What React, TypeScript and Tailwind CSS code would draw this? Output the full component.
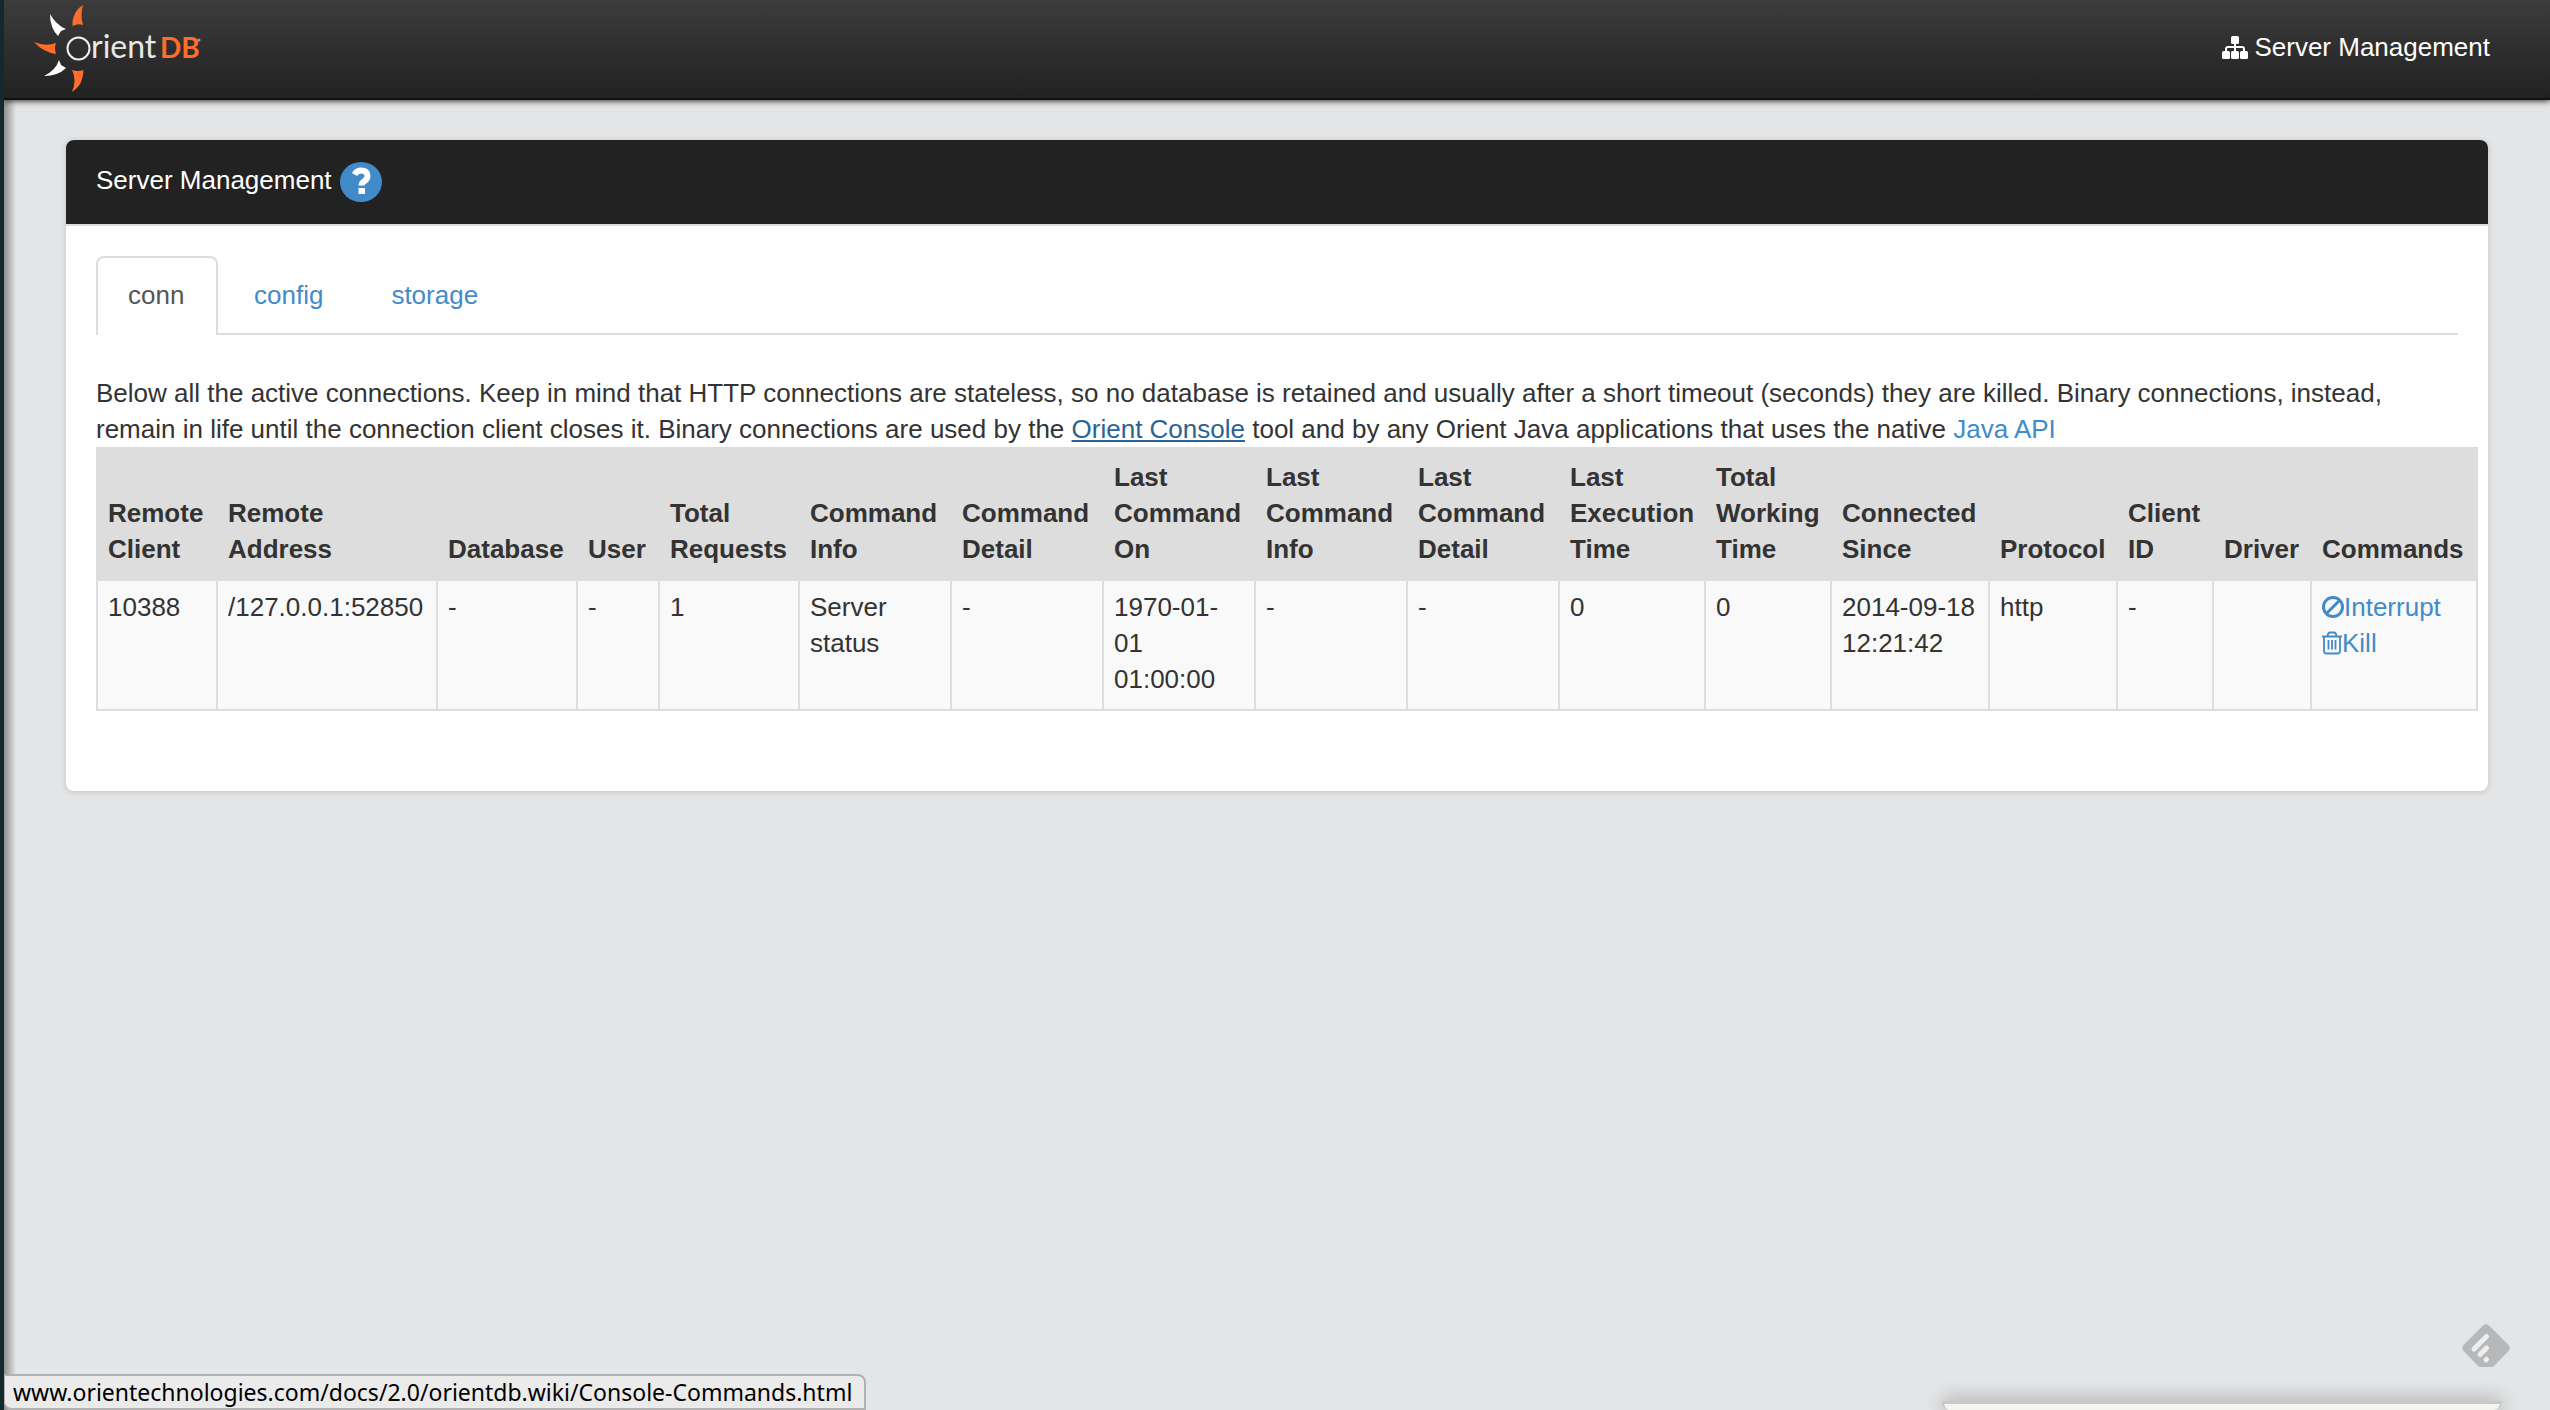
import React from "react";

const columns: { title: string; width: string; value: string }[] = [
  { title: "Remote\nClient", width: "w-[120px]", value: "10388" },
  { title: "Remote\nAddress", width: "w-[220px]", value: "/127.0.0.1:52850" },
  { title: "Database", width: "w-[140px]", value: "-" },
  { title: "User", width: "w-[82px]", value: "-" },
  { title: "Total\nRequests", width: "w-[140px]", value: "1" },
  { title: "Command\nInfo", width: "w-[152px]", value: "Server\nstatus" },
  { title: "Command\nDetail", width: "w-[152px]", value: "-" },
  { title: "Last\nCommand\nOn", width: "w-[152px]", value: "1970-01-\n01\n01:00:00" },
  { title: "Last\nCommand\nInfo", width: "w-[152px]", value: "-" },
  { title: "Last\nCommand\nDetail", width: "w-[152px]", value: "-" },
  { title: "Last\nExecution\nTime", width: "w-[146px]", value: "0" },
  { title: "Total\nWorking\nTime", width: "w-[126px]", value: "0" },
  { title: "Connected\nSince", width: "w-[158px]", value: "2014-09-18\n12:21:42" },
  { title: "Protocol", width: "w-[128px]", value: "http" },
  { title: "Client\nID", width: "w-[96px]", value: "-" },
  { title: "Driver", width: "w-[98px]", value: "" },
  { title: "Commands", width: "w-[166px]", value: "" },
];

function Logo() {
  return (
    <svg viewBox="0 0 180 98" className="h-[98px] w-[180px]" role="img" aria-label="OrientDB">
      <path d="M53 5C46 9 42 17 42.500 26Q48 23 53 25Q50 15 53 5Z" fill="#ff6c2c" />
      <path d="M20 14Q20 28 28 36L31 31L36 29Q26 25 20 14Z" fill="#fff" />
      <path d="M4 42Q13 52 26 54Q24 48 26 43Q16 47 4 42Z" fill="#ff6c2c" />
      <path d="M14 76Q28 76 36 68L31 65L29 60Q26 70 14 76Z" fill="#fff" />
      <path d="M42 70Q48 72 53.500 70C53 80 50 87 42 92Q47 80 42 70Z" fill="#ff6c2c" />
      <circle cx="48.500" cy="48.500" r="11" fill="none" stroke="#f2f2f2" strokeWidth="2" />
      <text x="61" y="58" fontSize="32" fontFamily="Lato" fontWeight="400" fill="#e8e8e8">rient</text>
      <text x="130" y="58" fontSize="28" fontFamily="Lato" fontWeight="700" fill="#ff6c2c">DB</text>
      <circle cx="169" cy="40" r="1.500" fill="#999" />
    </svg>
  );
}

function SitemapIcon() {
  return (
    <svg viewBox="0 0 26 24" className="h-6 w-[26px]" fill="#fff" aria-hidden="true">
      <rect x="9" y="1" width="8" height="8" rx="1.500" />
      <rect x="0" y="16" width="8" height="8" rx="1.500" />
      <rect x="9" y="16" width="8" height="8" rx="1.500" />
      <rect x="18" y="16" width="8" height="8" rx="1.500" />
      <path d="M13 8v9M4 17v-3q0-2 2-2h14q2 0 2 2v3" fill="none" stroke="#fff" strokeWidth="2" />
    </svg>
  );
}

function HelpIcon() {
  return (
    <svg viewBox="0 0 42 40" className="h-10 w-[42px]" aria-hidden="true">
      <ellipse cx="21" cy="20" rx="21" ry="20" fill="#428bca" />
      <path d="M14.500 12.500Q17 8.500 21 8.500Q27.500 8.500 27.500 14Q27.500 17 24.500 19Q21.500 21 21.500 23.500" fill="none" stroke="#fff" strokeWidth="6" />
      <rect x="18.500" y="26" width="6.500" height="6" fill="#fff" />
    </svg>
  );
}

function BanIcon() {
  return (
    <svg viewBox="0 0 22 24" className="inline h-6 w-[22px] align-[-3px]" fill="none" stroke="currentColor" strokeWidth="3" aria-hidden="true">
      <circle cx="11" cy="12" r="9.500" />
      <path d="M4.500 18.500L17.500 5.500" />
    </svg>
  );
}

function TrashIcon() {
  return (
    <svg viewBox="0 0 20 24" className="inline h-6 w-5 align-[-3px]" fill="none" stroke="currentColor" strokeWidth="1.800" aria-hidden="true">
      <path d="M0 5.500H20M2 5.500V20Q2 22.500 4.500 22.500H15.500Q18 22.500 18 20V5.500M5.500 5Q6 1.500 8 1.500H12Q14 1.500 14.500 5M6.500 9V18.500M10 9V18.500M13.500 9V18.500" />
    </svg>
  );
}

function FeedlyIcon() {
  return (
    <svg viewBox="0 0 48 44" className="h-11 w-12" aria-hidden="true">
      <path d="M21 1.500Q24 -1 27 1.500L46.500 21Q49 24 46.500 27L32 42Q31 43 29 43H19Q17 43 16 42L1.500 27Q-1 24 1.500 21Z" fill="#b6b8ba" />
      <path d="M12 25L24.500 12.500M18 30.500L24.500 24M24 36L24.500 35.500" stroke="#eee" strokeWidth="5" strokeLinecap="round" />
    </svg>
  );
}

export default function App() {
  return (
    <div className="relative flex min-h-screen flex-col overflow-hidden border-l-4 border-[#14292d] bg-[#e4e5e7] font-['Liberation_Sans',sans-serif] text-[26px] leading-9 text-[#333]">
      <div className="pointer-events-none absolute inset-y-0 left-0 w-3 bg-linear-to-r from-[#8d8e90] to-transparent" />
      <header className="relative flex h-[100px] items-center justify-between border-b-2 border-[#111] bg-linear-to-b from-[#3c3c3c] to-[#222] pr-[60px] pl-[26px] shadow-[0_1px_6px_rgba(0,0,0,0.8)]">
        <a href="#home"><Logo /></a>
        <a href="#server" className="flex items-center gap-1.5 pb-1 text-white">
          <SitemapIcon />
          Server Management
        </a>
      </header>

      <main className="relative mx-[62px] mt-10 rounded-lg bg-white pb-20 shadow-[0_1px_6px_rgba(0,0,0,0.15)]">
        <h1 className="flex h-[86px] items-center gap-2 rounded-t-lg border-b-2 border-[#ddd] bg-[#222] px-[30px] text-white">
          <span className="pb-1">Server Management</span>
          <button type="button" aria-label="Help"><HelpIcon /></button>
        </h1>

        <div className="px-[30px] pt-[30px]">
          <nav className="flex gap-1 border-b-2 border-[#ddd]">
            <a href="#conn" aria-current="page" className="-mb-0.5 min-w-[122px] rounded-t-lg border-2 border-b-0 border-[#ddd] bg-white px-[30px] pt-[19px] pb-[22px] text-[#555]">conn</a>
            <a href="#config" className="px-8 pt-[21px] pb-5 text-[#428bca]">config</a>
            <a href="#storage" className="px-8 pt-[21px] pb-5 text-[#428bca]">storage</a>
          </nav>

          <p className="pt-10">
            Below all the active connections. Keep in mind that HTTP connections are stateless, so no database is retained and usually after a short timeout (seconds) they are killed. Binary connections, instead, remain in life until the connection client closes it. Binary connections are used by the{" "}
            <a href="#console" className="text-[#2a6496] underline decoration-2 underline-offset-2">Orient Console</a>{" "}
            tool and by any Orient Java applications that uses the native{" "}
            <a href="#java" className="text-[#428bca]">Java API</a>
          </p>

          <div className="-mr-5">
            <table className="w-full table-fixed border-collapse">
              <thead className="bg-[#ddd]">
                <tr>
                  {columns.map((c, i) => (
                    <th key={i} scope="col" className={c.width + " border-2 border-[#ddd] px-2.5 pt-2.5 pb-3 text-left align-bottom font-bold whitespace-pre"}>{c.title}</th>
                  ))}
                </tr>
              </thead>
              <tbody>
                <tr className="bg-[#f9f9f9]">
                  {columns.map((c, i) => (
                    <td key={i} className="border-2 border-[#ddd] px-2.5 pt-2 pb-3 align-top whitespace-pre">
                      {c.title === "Commands" ? (
                        <>
                          <a href="#interrupt" className="block text-[#428bca]"><BanIcon />Interrupt</a>
                          <a href="#kill" className="block text-[#428bca]"><TrashIcon />Kill</a>
                        </>
                      ) : c.value}
                    </td>
                  ))}
                </tr>
              </tbody>
            </table>
          </div>
        </div>
      </main>

      <button type="button" aria-label="Open feedly" className="absolute right-10 bottom-[42px]"><FeedlyIcon /></button>
      <div className="absolute bottom-0 left-0 rounded-tr-lg rounded-bl-lg border-2 border-l border-[#b2b2b2] bg-[#ebebeb] pr-3 pl-2 font-['Noto_Sans',sans-serif] text-[23px] leading-8 text-black">
        www.orientechnologies.com/docs/2.0/orientdb.wiki/Console-Commands.html
      </div>
      <div className="absolute right-12 bottom-0 h-[9px] w-[560px] rounded-b-lg border-x-2 border-t-3 border-[#c8c8c8] bg-[#f5f5f0] shadow-[0_0_20px_rgba(0,0,0,0.4)]" />
    </div>
  );
}
